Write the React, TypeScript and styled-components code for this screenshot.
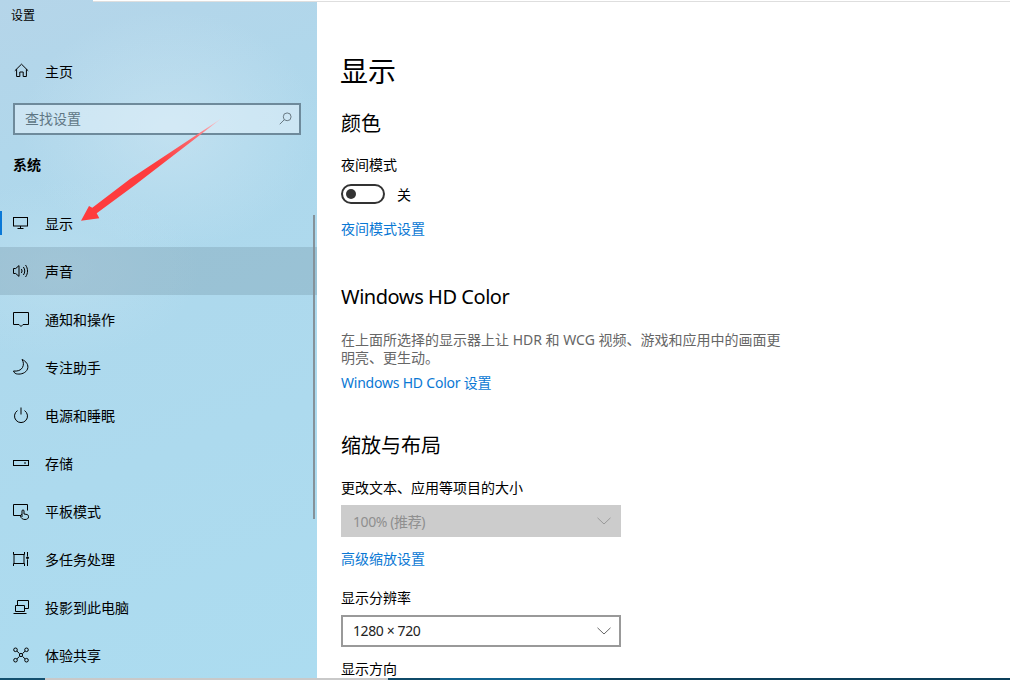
import React from 'react'
import styled, { createGlobalStyle } from 'styled-components'

const navItems = [
  { label: '显示', icon: 'display', selected: true },
  { label: '声音', icon: 'sound', hovered: true },
  { label: '通知和操作', icon: 'notify' },
  { label: '专注助手', icon: 'moon' },
  { label: '电源和睡眠', icon: 'power' },
  { label: '存储', icon: 'storage' },
  { label: '平板模式', icon: 'tablet' },
  { label: '多任务处理', icon: 'tasks' },
  { label: '投影到此电脑', icon: 'project' },
  { label: '体验共享', icon: 'share' },
]

const glyphs: Record<string, React.ReactNode> = {
  home: <path d="M.8 7.800 7.500 1.200l6.700 6.600M2.600 6.200v7.300h3.200V9h3.400v4.500h3.200V6.200" />,
  display: (
    <>
      <rect x=".5" y="2.500" width="14" height="8.500" />
      <path d="M7.500 11v2M4.500 13.500h6" />
    </>
  ),
  sound: (
    <>
      <path d="M.5 5.500h2.200L6 2.600v10.800L2.700 10.500H.5z" />
      <path d="M8.300 6c.9 1.200.9 2.800 0 4M10.400 4c1.800 2.400 1.800 5.600 0 8M12.500 2c2.700 3.500 2.700 8.500 0 12" />
    </>
  ),
  notify: <path d="M.5 1.500h15v12H10l-2 2-2-2H.5z" />,
  moon: <path d="M9 .5c4 1.500 7 5.500 5.500 9.500C13 14 8 15.500 4.500 15 3 15 1 14 .5 12c3.500.5 7.500-.5 9-3.500C11 5.500 10.500 3 9 .5z" />,
  power: (
    <>
      <path d="M4.500 3.600a6.500 6.500 0 1 0 7 0" />
      <path d="M8 .5v7" />
    </>
  ),
  storage: (
    <>
      <rect x=".5" y="5.500" width="15" height="5" />
      <path d="M11 8h2" />
    </>
  ),
  tablet: (
    <>
      <path d="M8 12.500H.5v-11h14v6" />
      <path d="M9 14V8c0-1.500 2-1.500 2 0v3l3 .5c1.500.5 1.500 1.500 1.500 2.500 0 1.500-1.500 2.500-3.500 2.500S8 15.500 7.500 13c0-1 .5-1.500 1.500-1.500" />
    </>
  ),
  tasks: (
    <>
      <path d="M.5 1v2.500h11V1M.5 15v-2.500h11V15M1 3.500v9M11 3.500v9" />
      <path d="M14.500 1v4M14.500 8.500v6.500" />
      <circle cx="14.500" cy="6.800" r="1" fill="currentColor" />
    </>
  ),
  project: (
    <>
      <path d="M4.500 6V1.500h11v8H11.500" />
      <path d="M2.500 6.500h9v6h-9zM.5 14.500h13" />
    </>
  ),
  share: (
    <>
      <circle cx="2.500" cy="2.800" r="1.800" />
      <circle cx="13.500" cy="2.800" r="1.800" />
      <circle cx="2.500" cy="13.200" r="1.800" />
      <circle cx="13.500" cy="13.200" r="1.800" />
      <path d="m4 4.200 2.600 2.500M12 4.200 9.400 6.700M4 11.800l2.600-2.500M12 11.800 9.400 9.300" />
      <circle cx="8" cy="8" r="1.600" />
    </>
  ),
}

const NavIcon = ({ name }: { name: string }) => (
  <IconSvg viewBox="0 0 16 16">{glyphs[name]}</IconSvg>
)

const Chevron = ({ muted }: { muted?: boolean }) => (
  <ChevronSvg $muted={muted} viewBox="0 0 14 8">
    <path d="M.5.8 7 7 13.500.8" />
  </ChevronSvg>
)

const App = () => {
  return (
    <Page>
      <GlobalStyle />
      <TopEdge />
      <Main>
        <Sidebar>
          <WindowTitle>设置</WindowTitle>
          <HomeRow>
            <NavIcon name="home" />
            <span>主页</span>
          </HomeRow>
          <SearchBox>
            <span>查找设置</span>
            <SearchSvg viewBox="0 0 14 14">
              <circle cx="8.800" cy="5.200" r="4.200" />
              <path d="M5.800 8.200.8 13.200" />
            </SearchSvg>
          </SearchBox>
          <GroupLabel>系统</GroupLabel>
          <NavList>
            {navItems.map((item) => (
              <NavRow key={item.label} $selected={item.selected} $hovered={item.hovered}>
                <NavIcon name={item.icon} />
                <span>{item.label}</span>
              </NavRow>
            ))}
          </NavList>
          <ScrollThumb />
        </Sidebar>
        <Content>
          <PageTitle>显示</PageTitle>
          <SectionTitle $top={19}>颜色</SectionTitle>
          <FieldLabel $top={17}>夜间模式</FieldLabel>
          <ToggleRow>
            <Toggle />
            <span>关</span>
          </ToggleRow>
          <SettingLink $top={15}>夜间模式设置</SettingLink>

          <LatinTitle>Windows HD Color</LatinTitle>
          <Description>
            在上面所选择的显示器上让 HDR 和 WCG 视频、游戏和应用中的画面更明亮、更生动。
          </Description>
          <SettingLink $top={6} $tight>Windows HD Color 设置</SettingLink>

          <SectionTitle $top={39}>缩放与布局</SectionTitle>
          <FieldLabel $top={18}>更改文本、应用等项目的大小</FieldLabel>
          <DropdownDisabled>
            <DropdownValue>100% (推荐)</DropdownValue>
            <Chevron muted />
          </DropdownDisabled>
          <SettingLink $top={12}>高级缩放设置</SettingLink>
          <FieldLabel $top={19}>显示分辨率</FieldLabel>
          <Dropdown>
            <DropdownValue>1280 × 720</DropdownValue>
            <Chevron />
          </Dropdown>
          <FieldLabel $top={12}>显示方向</FieldLabel>
        </Content>
      </Main>
      <BottomEdge>
        <EdgeSegment $w="45px" $color="#14506f" />
        <EdgeSegment $w="343px" $color="#c9c9c9" />
        <EdgeSegment $w="52px" $color="#0f4a68" />
        <EdgeSegment $w="160px" $color="#11638f" />
        <EdgeSegment $w="410px" $color="#0c3f5a" />
      </BottomEdge>
      <ArrowSvg viewBox="0 0 160 120">
        <defs>
          <linearGradient id="arrowFade" x1="1" y1="0" x2="0" y2="1">
            <stop offset="0" stopColor="#f9d0d8" />
            <stop offset=".18" stopColor="#fb6b70" />
            <stop offset=".45" stopColor="#fe3c3e" />
          </linearGradient>
        </defs>
        <polygon
          points="141.700,1.300 50,62 12.300,90.700 9,89 1,103.700 19.300,101.300 16.700,96.300 55,68"
          fill="url(#arrowFade)"
        />
      </ArrowSvg>
    </Page>
  )
}

export default App

const GlobalStyle = createGlobalStyle`
  html, body {
    margin: 0;
    padding: 0;
    background: #fff;
  }
  * {
    box-sizing: border-box;
  }
`
const Page = styled.div`
  position: relative;
  width: 1010px;
  height: 680px;
  overflow: hidden;
  display: flex;
  flex-direction: column;
  background: #fff;
  color: #000;
  font-family: "Noto Sans", "Noto Sans CJK SC", sans-serif;
  font-size: 14px;
`
const TopEdge = styled.div`
  position: absolute;
  top: 0;
  left: 93px;
  right: 0;
  height: 2px;
  background: #fff;
  border-bottom: 1px solid #dedede;
  z-index: 2;
`
const Main = styled.div`
  flex: 1;
  min-height: 0;
  display: flex;
`
const Sidebar = styled.div`
  position: relative;
  width: 317px;
  flex-shrink: 0;
  display: flex;
  flex-direction: column;
  overflow: hidden;
  background:
    radial-gradient(ellipse 150px 120px at 170px 130px, rgba(205, 230, 243, 0.6), transparent),
    radial-gradient(ellipse 140px 90px at 60px 270px, rgba(190, 224, 240, 0.6), transparent),
    linear-gradient(160deg, #b5d5e9 0%, #aed8ec 30%, #acdcf0 100%);
  & > * {
    flex-shrink: 0;
  }
`
const WindowTitle = styled.div`
  height: 32px;
  padding-left: 11px;
  line-height: 32px;
  font-size: 12px;
`
const HomeRow = styled.div`
  height: 48px;
  margin-top: 15px;
  padding-left: 14px;
  display: flex;
  align-items: center;
  gap: 15px;
`
const IconSvg = styled.svg`
  width: 16px;
  height: 16px;
  flex-shrink: 0;
  fill: none;
  stroke: currentColor;
  stroke-width: 1;
  overflow: visible;
`
const SearchBox = styled.div`
  height: 32px;
  margin: 8px 16px 0 13px;
  padding: 0 7px 2px 10px;
  display: flex;
  align-items: center;
  justify-content: space-between;
  border: 2px solid #6e8a9b;
  background: rgba(226, 241, 249, 0.55);
  color: #5f7785;
`
const SearchSvg = styled.svg`
  width: 13px;
  height: 13px;
  fill: none;
  stroke: #61717b;
  stroke-width: 1;
`
const GroupLabel = styled.div`
  height: 20px;
  margin-top: 20px;
  padding-left: 13px;
  line-height: 20px;
  font-size: 14px;
  font-weight: 700;
`
const NavList = styled.div`
  margin-top: 24px;
  display: flex;
  flex-direction: column;
`
const NavRow = styled.div<{ $selected?: boolean; $hovered?: boolean }>`
  position: relative;
  height: 48px;
  flex-shrink: 0;
  padding-left: 13px;
  display: flex;
  align-items: center;
  gap: 16px;
  background: ${(p) => (p.$hovered ? 'rgba(90, 120, 140, 0.24)' : 'transparent')};
  &::before {
    content: "";
    display: ${(p) => (p.$selected ? 'block' : 'none')};
    position: absolute;
    left: 0;
    top: 12px;
    width: 2px;
    height: 24px;
    background: #0a78d7;
  }
`
const ScrollThumb = styled.div`
  position: absolute;
  top: 215px;
  right: 2px;
  width: 2px;
  height: 304px;
  background: #85929a;
`
const Content = styled.div`
  flex: 1;
  padding: 51px 0 0 24px;
  display: flex;
  flex-direction: column;
  align-items: flex-start;
  overflow: hidden;
  & > * {
    flex-shrink: 0;
  }
`
const PageTitle = styled.div`
  height: 40px;
  line-height: 40px;
  font-size: 28px;
  margin-left: -1px;
`
const SectionTitle = styled.div<{ $top: number }>`
  height: 28px;
  margin-top: ${(p) => p.$top}px;
  line-height: 28px;
  font-size: 20px;
`
const LatinTitle = styled(SectionTitle).attrs({ $top: 44 })`
  letter-spacing: -0.45px;
`
const FieldLabel = styled.div<{ $top: number }>`
  height: 20px;
  margin-top: ${(p) => p.$top}px;
  line-height: 20px;
`
const ToggleRow = styled.div`
  height: 20px;
  margin-top: 9px;
  display: flex;
  align-items: center;
  gap: 12px;
`
const Toggle = styled.div`
  width: 44px;
  height: 20px;
  padding-left: 3px;
  display: flex;
  align-items: center;
  border: 2px solid #333;
  border-radius: 10px;
  &::before {
    content: "";
    width: 10px;
    height: 10px;
    border-radius: 50%;
    background: #333;
  }
`
const SettingLink = styled.div<{ $top: number; $tight?: boolean }>`
  height: 20px;
  margin-top: ${(p) => p.$top}px;
  line-height: 20px;
  color: #0a78d4;
  letter-spacing: ${(p) => (p.$tight ? '-0.22px' : 'normal')};
`
const Description = styled.div`
  width: 442px;
  margin-top: 20px;
  line-height: 18px;
  color: #666;
`
const Dropdown = styled.div`
  width: 280px;
  height: 32px;
  margin-top: 7px;
  padding: 0 8px 1px 10px;
  display: flex;
  align-items: center;
  justify-content: space-between;
  border: 2px solid #999;
  color: #222;
`
const DropdownDisabled = styled(Dropdown)`
  border-color: #ccc;
  background: #ccc;
  color: #8f8f8f;
`
const DropdownValue = styled.span`
  letter-spacing: -0.4px;
`
const ChevronSvg = styled.svg<{ $muted?: boolean }>`
  width: 14px;
  height: 8px;
  fill: none;
  stroke: ${(p) => (p.$muted ? '#9a9a9a' : '#666')};
  stroke-width: 1;
`
const BottomEdge = styled.div`
  height: 2px;
  flex-shrink: 0;
  display: flex;
`
const EdgeSegment = styled.div<{ $w: string; $color: string }>`
  width: ${(p) => p.$w};
  background: ${(p) => p.$color};
`
const ArrowSvg = styled.svg`
  position: absolute;
  left: 80px;
  top: 117px;
  width: 160px;
  height: 120px;
  pointer-events: none;
`
